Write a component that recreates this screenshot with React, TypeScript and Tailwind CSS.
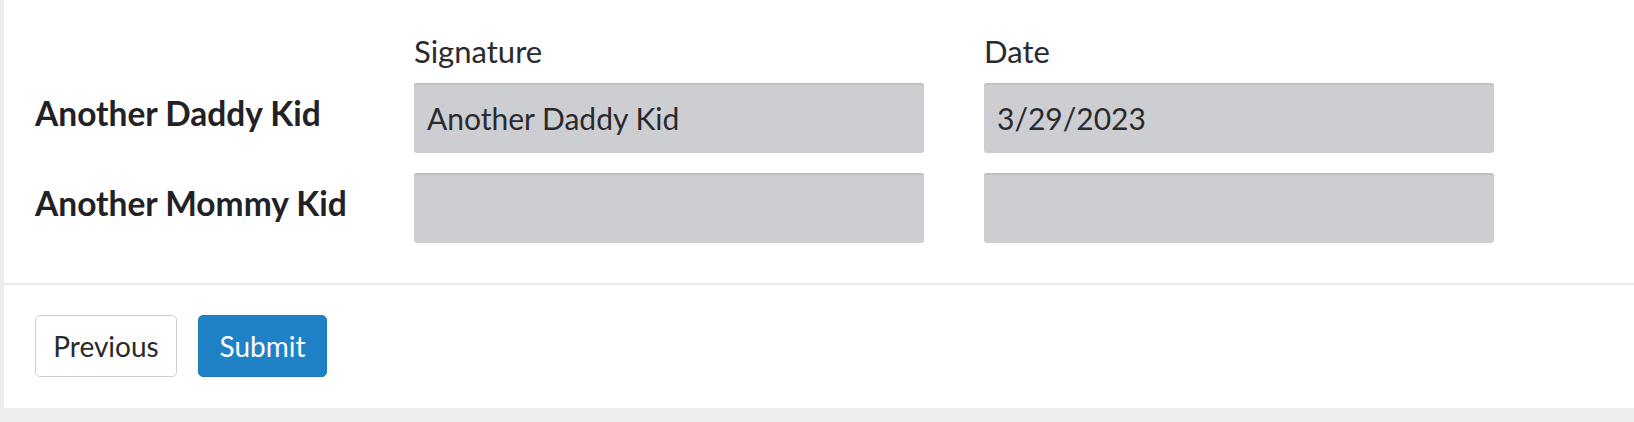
import React from "react";

const FONT = "font-['Lato','Liberation_Sans',sans-serif]";

const ROWS = [
  { name: "Another Daddy Kid", signature: "Another Daddy Kid", date: "3/29/2023" },
  { name: "Another Mommy Kid", signature: "", date: "" },
];

function Box({ value }: { value: string }) {
  return (
    <div className="flex h-[70px] items-center rounded-[3px] bg-[#cdced2] pl-[13px] text-[30px] text-[#2a2a2e] shadow-[inset_0_2px_0_#bfc0c4]">
      {value}
    </div>
  );
}

export default function App() {
  return (
    <div className={`${FONT} h-[422px] w-full bg-[#ededed] pb-[14px] pl-[4px]`}>
      <div className="bg-white">
        {/* signature table */}
        <div className="grid grid-cols-[319px_510px_510px] gap-x-[60px] pl-[31px] pt-[35px] pb-[40px]">
          <div />
          <div className="mb-[15px] text-[31px] leading-[33px] text-[#2a2a2e]">Signature</div>
          <div className="mb-[15px] text-[31px] leading-[33px] text-[#2a2a2e]">Date</div>

          {ROWS.map((r, i) => (
            <React.Fragment key={r.name}>
              <div
                className={`flex h-[70px] items-center pb-[9px] text-[33.5px] font-bold whitespace-nowrap text-[#222226] ${
                  i > 0 ? "mt-[20px]" : ""
                }`}
              >
                {r.name}
              </div>
              <div className={i > 0 ? "mt-[20px]" : ""}>
                <Box value={r.signature} />
              </div>
              <div className={i > 0 ? "mt-[20px]" : ""}>
                <Box value={r.date} />
              </div>
            </React.Fragment>
          ))}
        </div>

        <div className="h-[2px] bg-[#e6e9ed]" />

        {/* footer */}
        <div className="flex gap-[21px] pl-[31px] pt-[30px] pb-[31px]">
          <button
            type="button"
            className="h-[62px] w-[142px] rounded-[5px] border-[1.5px] border-[#cfcfcf] bg-white text-[28px] text-[#2a2a2a]"
          >
            Previous
          </button>
          <button
            type="button"
            className="h-[62px] w-[129px] rounded-[5px] border-[1.5px] border-[#1c79bb] bg-[#1f82c7] text-[28px] text-white"
          >
            Submit
          </button>
        </div>
      </div>
    </div>
  );
}
